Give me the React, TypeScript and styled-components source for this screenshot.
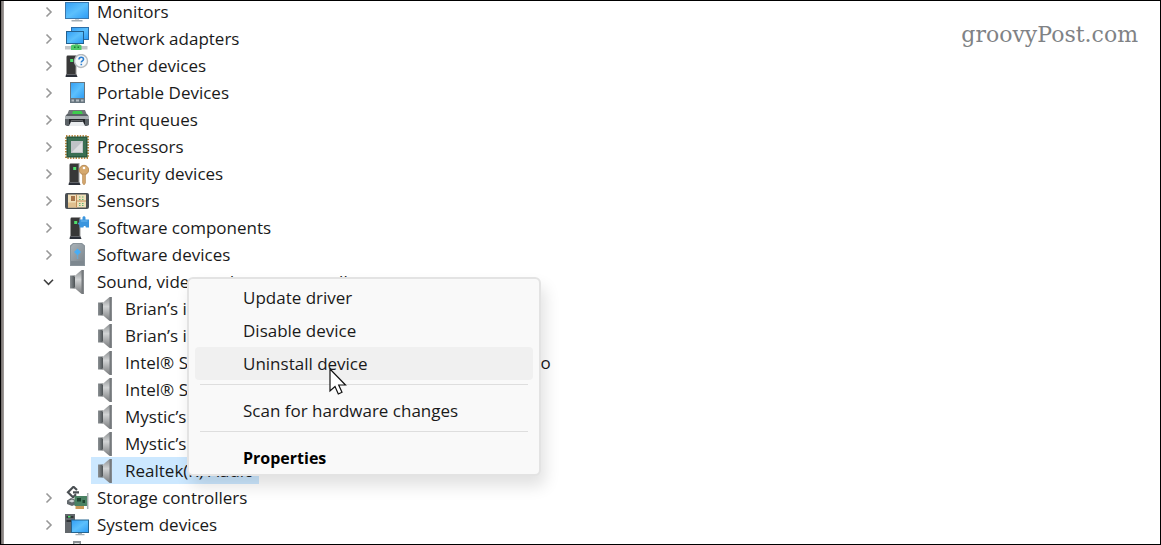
import React from "react";
import styled, { createGlobalStyle } from "styled-components";

const GlobalStyle = createGlobalStyle`
  * { box-sizing: border-box; }
  body { margin: 0; background: #fff; }
`;

const uiFont = `"Open Sans", "Noto Sans", sans-serif`;

const Window = styled.main`
  position: relative;
  display: flex;
  height: 100vh;
  overflow: hidden;
  background: #fff;
  border: 1px solid #000;
  font-family: ${uiFont};
  font-size: 17px;
  line-height: 27px;
  color: #1a1a1a;
`;

const LeftEdge = styled.div`
  flex: none;
  width: 3px;
  background: linear-gradient(90deg, #6f6a68, #a5a09e);
`;

const Tree = styled.ul`
  flex: 1;
  margin: -3px 0 0;
  padding: 0 0 0 36px;
  list-style: none;
`;

const Branch = styled.ul`
  margin: 0;
  padding: 0 0 0 51px;
  list-style: none;
`;

const Row = styled.div`
  display: flex;
  align-items: center;
  height: 27px;
`;

const Expander = styled.button`
  display: flex;
  align-items: center;
  justify-content: center;
  width: 18px;
  height: 16px;
  margin-right: 7px;
  padding: 0;
  border: 0;
  background: none;
`;

const Label = styled.span`
  margin-left: 8px;
  white-space: nowrap;
`;

const Leaf = styled.div<{ $selected?: boolean }>`
  display: flex;
  align-items: center;
  width: max-content;
  height: 27px;
  padding: 0 5px 0 2px;
  background: ${(p) => (p.$selected ? "#cce8ff" : "transparent")};
`;

const Picture = styled.svg`
  flex: none;
  width: 24px;
  height: 24px;
`;

const SharedPaint = styled.svg`
  position: absolute;
  width: 0;
  height: 0;
`;

const Watermark = styled.div`
  position: absolute;
  top: 18px;
  right: 22px;
  font-family: "DejaVu Serif", serif;
  font-size: 22px;
  line-height: 32px;
  color: #808285;
`;

const Menu = styled.div`
  position: absolute;
  top: 276px;
  left: 186px;
  width: 354px;
  padding: 2px 6px 0;
  background: #f9f9f9;
  border: 2px solid #e3e3e3;
  border-radius: 6px;
  box-shadow: 4px 10px 16px rgba(0, 0, 0, 0.12);
`;

const MenuItem = styled.button<{ $active?: boolean; $strong?: boolean }>`
  display: block;
  width: 100%;
  height: 33px;
  padding: 0 0 0 48px;
  border: 0;
  border-radius: 4px;
  background: ${(p) => (p.$active ? "#f0f0f0" : "transparent")};
  color: ${(p) => (p.$strong ? "#000" : "#1a1a1a")};
  font-family: ${uiFont};
  font-size: ${(p) => (p.$strong ? 16 : 17)}px;
  font-weight: ${(p) => (p.$strong ? 700 : 400)};
  text-align: left;
`;

const Divider = styled.hr`
  height: 1px;
  margin: 4px 5px 9px;
  border: 0;
  background: #dedede;
`;

const Pointer = styled.svg`
  position: absolute;
  top: 89px;
  left: 140px;
  width: 20px;
  height: 30px;
`;

const Chevron = ({ open }: { open?: boolean }) => (
  <svg width="12" height="12" viewBox="0 0 12 12" fill="none" aria-hidden="true">
    {open ? (
      <path d="M1 3.800 5.500 8.300l4.500-4.500" stroke="#404040" strokeWidth="1.600" />
    ) : (
      <path d="M3.500 1.500 8 6l-4.500 4.500" stroke="#989898" strokeWidth="1.600" />
    )}
  </svg>
);

const Defs = () => (
  <SharedPaint aria-hidden="true">
    <defs>
      <linearGradient id="screen" x1="0" y1="0" x2="1" y2="1">
        <stop offset="0" stopColor="#35a0f5" />
        <stop offset="0.5" stopColor="#5cc0fc" />
        <stop offset="1" stopColor="#2f9df5" />
      </linearGradient>
      <linearGradient id="cone" x1="0" y1="0" x2="0" y2="1">
        <stop offset="0" stopColor="#8a8d8f" />
        <stop offset="0.4" stopColor="#d2d4d5" />
        <stop offset="1" stopColor="#77797b" />
      </linearGradient>
      <linearGradient id="magnet" x1="0" y1="0" x2="1" y2="0">
        <stop offset="0" stopColor="#8d9295" />
        <stop offset="1" stopColor="#4e5356" />
      </linearGradient>
      <linearGradient id="steel" x1="0" y1="0" x2="1" y2="1">
        <stop offset="0" stopColor="#a9b2b8" />
        <stop offset="1" stopColor="#7f888f" />
      </linearGradient>
    </defs>
  </SharedPaint>
);

const Tower = ({ x = 4 }: { x?: number }) => (
  <g transform={`translate(${x} 0)`}>
    <path d="M0 2.500 1.500 1h9v20H0z" fill="#9a9a9a" />
    <path d="M1 2h8.500v18H1z" fill="#383838" />
    <path d="M0 20.500h10.500l1 2.500h-12z" fill="#2b2f38" />
    <path d="M4.200 5h3v3h-3z" fill="#4fe06c" />
  </g>
);

const icons: Record<string, React.ReactNode> = {
  monitor: (
    <>
      <path d="M0 2h24v17H0z" fill="#3b78ad" />
      <path d="M1 3h22v15H1z" fill="url(#screen)" />
      <path d="M10 19h4v1.500h-4z" fill="#c9d2d8" />
      <path d="M6.500 20h11v1.500h-11z" fill="#a5aeb4" />
    </>
  ),
  network: (
    <>
      <path d="M6 0h18v13H6z" fill="#2d6ea8" />
      <path d="M7 1h16v11H7z" fill="url(#screen)" />
      <path d="M1 4h18v13H1z" fill="#24618f" />
      <path d="M2 5h16v11H2z" fill="url(#screen)" />
      <path d="M10 17h3v2h-3z" fill="#8da0a8" />
      <path d="M0 19h22.500v3.500H0z" fill="#c2c5c7" />
      <path d="M6 18.500l2-1h6.500l2 1V23H6z" fill="#4fc96a" />
      <path d="M9 19.500h1.500V21H9zM12.500 19.500H14V21h-1.500z" fill="#1b7a35" />
    </>
  ),
  other: (
    <>
      <Tower x={1} />
      <circle cx="16" cy="7" r="6.500" fill="#f4f7f9" stroke="#b5babe" strokeWidth="1.400" />
      <path d="M14 5.500c0-3 4.500-3 4.500-.3 0 1.800-2.200 1.600-2.200 3.300M16.300 9.800v1.500" fill="none" stroke="#2c7fd1" strokeWidth="1.600" />
    </>
  ),
  portable: (
    <>
      <path d="M5 1h15v21H5z" fill="#67757f" />
      <path d="M6 2h13v15H6z" fill="url(#screen)" />
      <path d="M6.500 18.500H9v2H6.500zM11 18.500h3v2h-3zM16 18.500h2.500v2H16z" fill="#b3bcc2" />
    </>
  ),
  printer: (
    <>
      <path d="M4 2h16l2 5H2z" fill="#71767a" />
      <path d="M8 3h8.500l1.500 3.500H7z" fill="#3ecb4d" />
      <path d="M0 8.500 2 6h20l2 2.500V17l-2 1H2l-2-1z" fill="#5b6166" />
      <path d="M0 8h24v3H0z" fill="#a9afb3" />
      <path d="M4 11h16v5.500H4z" fill="#222529" />
      <path d="M6.500 12.500h11l2.500 5.500H4z" fill="#e9ecee" />
      <path d="M6.500 12.500h11l.5 1.500H6z" fill="#3b3f43" />
    </>
  ),
  processor: (
    <>
      <path d="M1 1h22v22H1z" fill="none" stroke="#b8843d" strokeWidth="2" strokeDasharray="1.400 1.350" />
      <path d="M1.500 1.500h21v21h-21z" fill="#285a41" />
      <path d="M3 3h18v18H3z" fill="#3a6f53" />
      <path d="M6 6h12v12H6z" fill="#bfc3c6" />
      <path d="M7 17 17 7v10z" fill="#dcdedf" />
    </>
  ),
  security: (
    <>
      <Tower x={4} />
      <circle cx="19" cy="8" r="4.700" fill="#d6a96e" stroke="#b98c55" />
      <circle cx="19" cy="6" r="1.300" fill="#fff" />
      <path d="M17.500 12h3v9L19 23l-1.500-2z" fill="#d2a56c" stroke="#b98c55" strokeWidth=".6" />
    </>
  ),
  sensor: (
    <>
      <rect x="0" y="4" width="24" height="16" rx="2" fill="#4a4f53" />
      <path d="M3 5.500h18v13H3z" fill="#f0dfb9" />
      <path d="M6 7h4v5H6z" fill="#a5744a" />
      <path d="M3 13.500h9v5H3z" fill="#e0c08f" />
      <path d="M11.500 5.500v13M12 12h9" stroke="#c08d58" />
      <path d="M14 8h5M14 10.500h5M14 14.500h5M14 16.500h5" stroke="#63b574" strokeDasharray="1.500 1.500" />
    </>
  ),
  component: (
    <>
      <Tower x={5} />
      <path d="M14.500 3.500h3V1.800c0-2 3-2 3 0v1.700H24v8h-3.200c.3-2-2.600-2-2.300 0h-4V8.800c-2 .3-2-2.700 0-2.400z" fill="#3a95de" />
      <path d="M16 5h6.500" stroke="#6fb9f0" />
    </>
  ),
  software: (
    <>
      <path d="M5 2.500 8 0h9l3 2.500V23H5z" fill="#89939a" />
      <path d="M6 3.500 8.500 1h8L19 3.500V18H6z" fill="url(#steel)" />
      <path d="M12.500 5.500 16 9l-3.500 3.500L9 9z" fill="#48adf5" />
      <path d="M12.500 12v4" stroke="#6fa6cc" strokeWidth="1.500" />
      <path d="M6 19h13M6 21h13" stroke="#737d84" />
    </>
  ),
  speaker: (
    <>
      <path d="M5 5.500h5v13H5z" fill="url(#magnet)" />
      <path d="M9 6.500 16 .500 18.500 0v24l-2.500-.5L9 17.500z" fill="url(#cone)" />
      <path d="M16.500 0h2.300v24h-2.300z" fill="#75797c" />
      <path d="M9.500 6.500v11" stroke="#53585b" />
    </>
  ),
  storage: (
    <>
      <path d="M12 4 8.500.800 3 6.300l5 5 3-3M8 6.300h6" fill="none" stroke="#4a4f53" strokeWidth="2.200" />
      <path d="M2 14.500l4-2.500 6 2.500V18l-5 2-5-2z" fill="#62686c" />
      <path d="M3.500 15 7 13.500l3 1.500-3 1.500z" fill="#d0d4d6" />
      <path d="M9.500 10H22v10H9.500z" fill="#4a8263" />
      <path d="M12 12h4v3.500h-4zM17.500 14H20v3h-2.500z" fill="#1e4530" />
      <path d="M22.700 7v16" stroke="#a9aeb1" strokeWidth="1.500" />
      <path d="M10.500 20H19v3h-8.500z" fill="#c99a58" />
    </>
  ),
  system: (
    <>
      <path d="M0 1h10v19H0z" fill="#62676b" />
      <path d="M1.500 3h7v2h-7zM1.500 7h7v2h-7z" fill="#303437" />
      <path d="M3 3h2.500v1.500H3z" fill="#4fe06c" />
      <path d="M6 6.500h18V20H6z" fill="#25648f" />
      <path d="M7 7.500h16V19H7z" fill="url(#screen)" />
      <path d="M13 20h4v1h2.500v1.200h-9V21H13z" fill="#a7b0b6" />
    </>
  ),
  usb: (
    <>
      <path d="M8 1h8v9H8z" fill="#8c9195" />
      <path d="M9.500 3h5v5h-5z" fill="#e1e3e4" />
      <path d="M6.500 9h11v14h-11z" fill="#777c80" />
    </>
  ),
};

const Icon = ({ name }: { name: string }) => (
  <Picture viewBox="0 0 24 24" aria-hidden="true">
    {icons[name]}
  </Picture>
);

type Category = { icon: string; label: string; children?: string[] };

const categories: Category[] = [
  { icon: "monitor", label: "Monitors" },
  { icon: "network", label: "Network adapters" },
  { icon: "other", label: "Other devices" },
  { icon: "portable", label: "Portable Devices" },
  { icon: "printer", label: "Print queues" },
  { icon: "processor", label: "Processors" },
  { icon: "security", label: "Security devices" },
  { icon: "sensor", label: "Sensors" },
  { icon: "component", label: "Software components" },
  { icon: "software", label: "Software devices" },
  {
    icon: "speaker",
    label: "Sound, video and game controllers",
    children: [
      "Brian’s iPad",
      "Brian’s iPhone",
      "Intel® Smart Sound Technology for Bluetooth® Audio",
      "Intel® Smart Sound Technology for USB",
      "Mystic’s iPad",
      "Mystic’s iPhone",
      "Realtek(R) Audio",
    ],
  },
  { icon: "storage", label: "Storage controllers" },
  { icon: "system", label: "System devices" },
  { icon: "usb", label: "" },
];

export default function App() {
  return (
    <Window>
      <GlobalStyle />
      <Defs />
      <LeftEdge />
      <Tree>
        {categories.map((c) => (
          <li key={c.icon}>
            <Row>
              <Expander aria-label={`Expand ${c.label}`} aria-expanded={!!c.children}>
                <Chevron open={!!c.children} />
              </Expander>
              <Icon name={c.icon} />
              {c.label && <Label>{c.label}</Label>}
            </Row>
            {c.children && (
              <Branch>
                {c.children.map((d) => (
                  <li key={d}>
                    <Leaf $selected={d.startsWith("Realtek")}>
                      <Icon name="speaker" />
                      <Label>{d}</Label>
                    </Leaf>
                  </li>
                ))}
              </Branch>
            )}
          </li>
        ))}
      </Tree>
      <Watermark>groovyPost.com</Watermark>
      <Menu role="menu">
        <MenuItem role="menuitem">Update driver</MenuItem>
        <MenuItem role="menuitem">Disable device</MenuItem>
        <MenuItem role="menuitem" $active>Uninstall device</MenuItem>
        <Divider />
        <MenuItem role="menuitem">Scan for hardware changes</MenuItem>
        <Divider />
        <MenuItem role="menuitem" $strong>Properties</MenuItem>
        <Pointer viewBox="0 0 20 30" aria-hidden="true">
          <path d="M1 1v22l5-4.500 3.300 7.500 3.700-1.700-3.300-7.300h6.800z" fill="#fff" stroke="#111" strokeWidth="1.200" />
        </Pointer>
      </Menu>
    </Window>
  );
}
